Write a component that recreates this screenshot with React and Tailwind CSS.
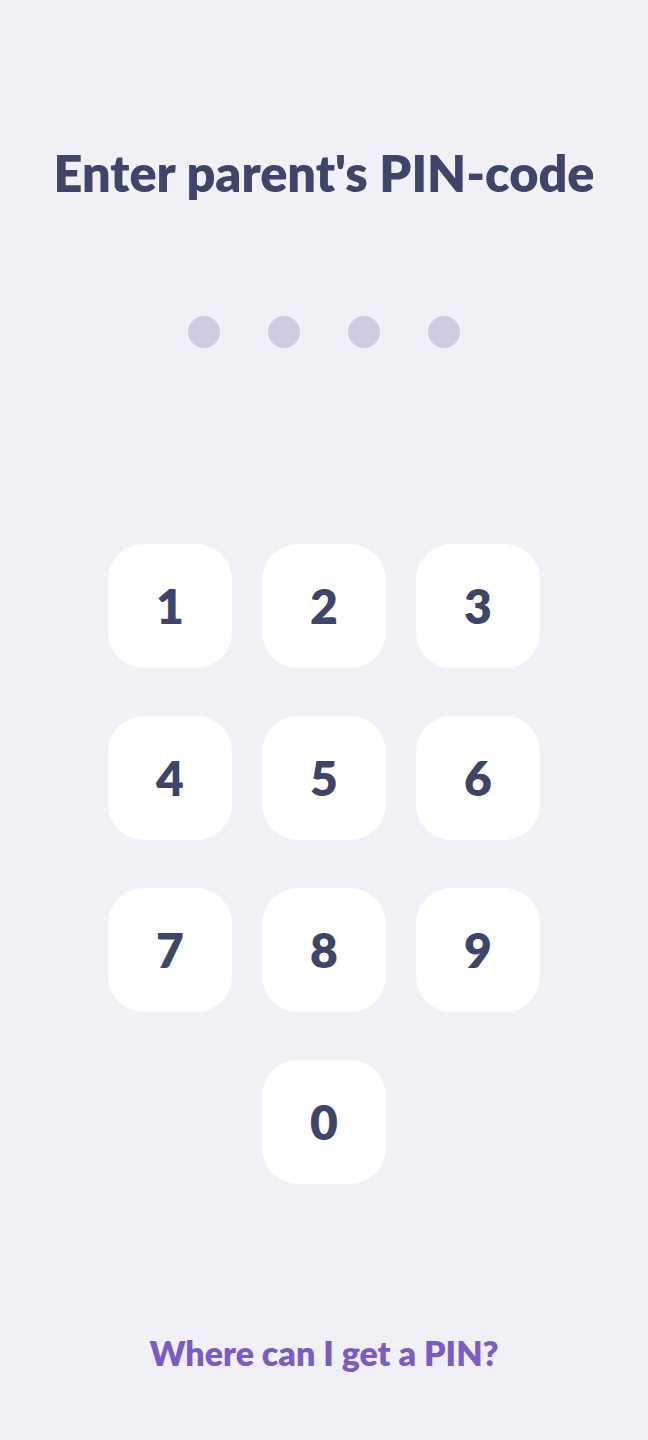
export default function App() {
  const keys = ["1", "2", "3", "4", "5", "6", "7", "8", "9"];
  return (
    <div
      className="min-h-[1440px] w-full bg-[#f2f0f7] flex flex-col items-center"
      style={{ fontFamily: "Lato, 'Noto Sans', sans-serif" }}
    >
      <h1 className="mt-[141px] text-[50.4px] leading-[64px] font-extrabold text-[#3f4569]">
        Enter parent's PIN-code
      </h1>

      {/* PIN dots */}
      <div className="mt-[111px] flex gap-12">
        {[0, 1, 2, 3].map((i) => (
          <span key={i} className="w-8 h-8 rounded-full bg-[#cdcbe2]" />
        ))}
      </div>

      {/* Keypad */}
      <div className="mt-[196px] grid grid-cols-[124px_124px_124px] gap-x-[30px] gap-y-12">
        {keys.map((k) => (
          <button
            key={k}
            className="w-[124px] h-[124px] rounded-[36px] bg-white text-[48px] font-extrabold text-[#3f4569] flex items-center justify-center"
          >
            {k}
          </button>
        ))}
        <button className="col-start-2 w-[124px] h-[124px] rounded-[36px] bg-white text-[48px] font-extrabold text-[#3f4569] flex items-center justify-center">
          0
        </button>
      </div>

      <button className="mt-[147px] text-[34px] leading-[44px] font-extrabold text-[#7b5cc4]">
        Where can I get a PIN?
      </button>
    </div>
  );
}
